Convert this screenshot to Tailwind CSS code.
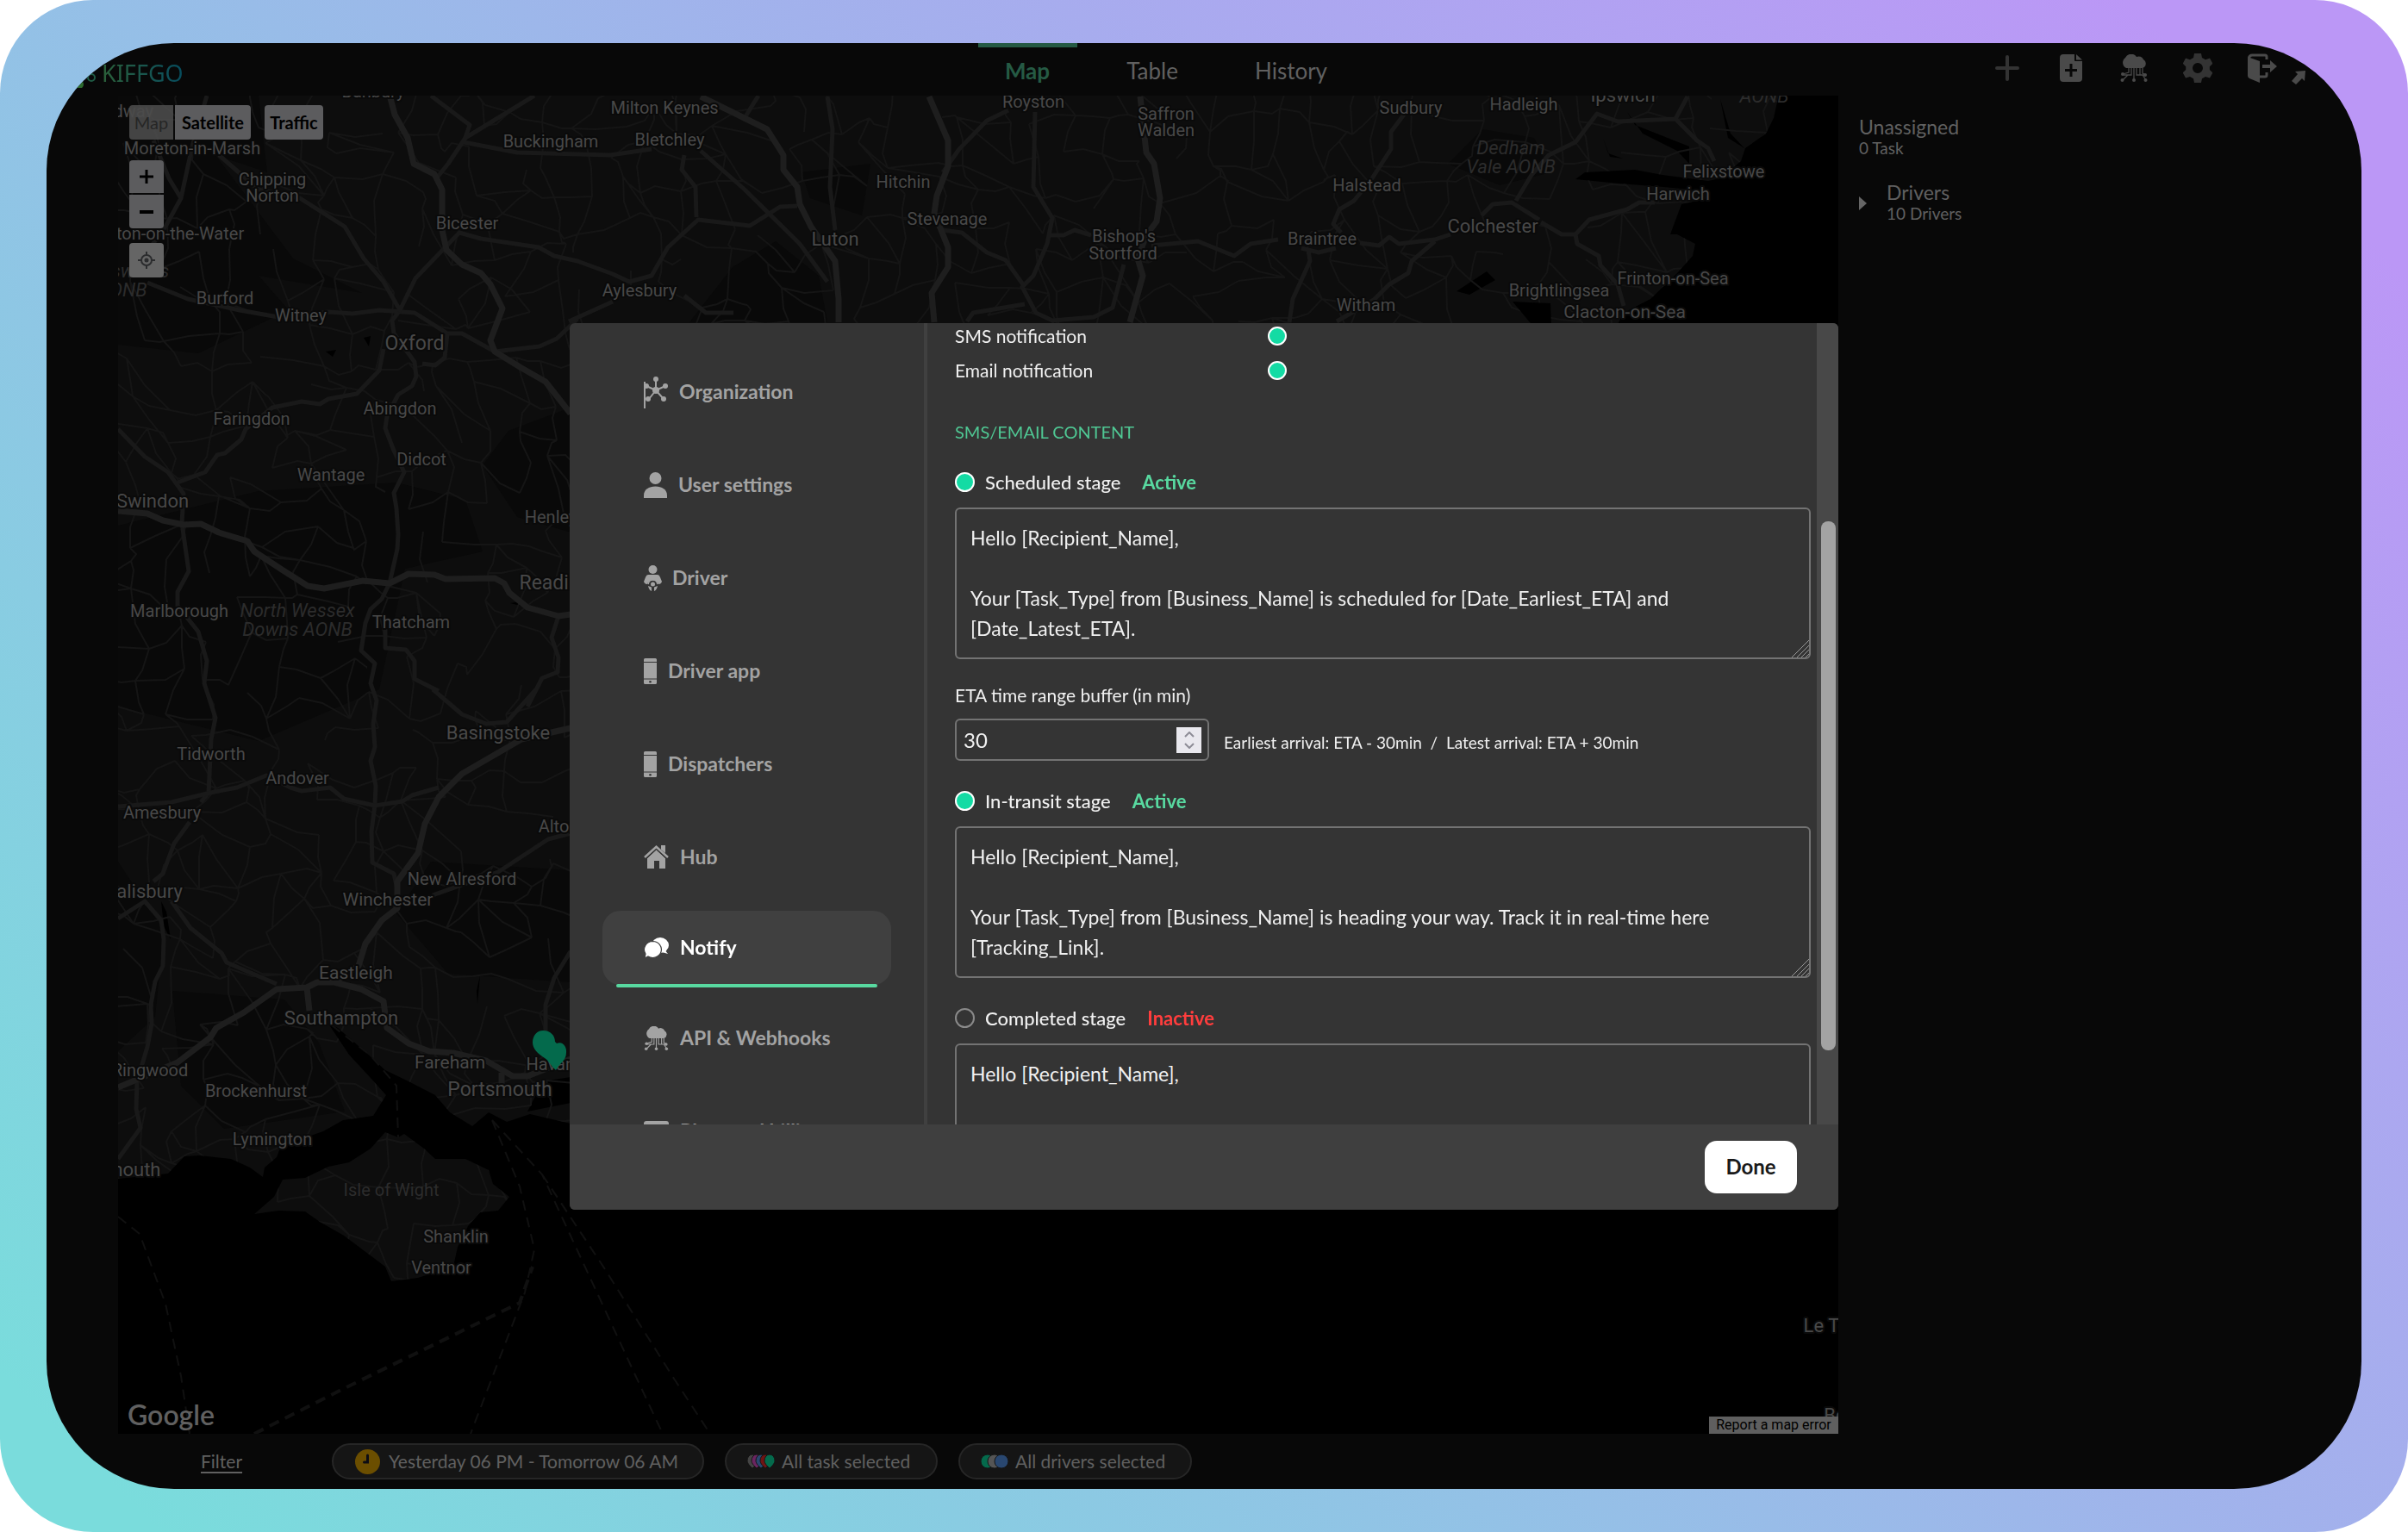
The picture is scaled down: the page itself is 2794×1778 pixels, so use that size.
<!DOCTYPE html>
<html lang="en">
<head>
<meta charset="utf-8">
<title>Kiffgo</title>
<script src="https://cdn.jsdelivr.net/npm/@tailwindcss/browser@4"></script>
</head>
<body class="bg-white font-['Lato',sans-serif]">
<div class="flex h-screen flex-col rounded-[108px] bg-[linear-gradient(45deg,#7adcdc_4%,#bb97f6_93%)] px-[54px] py-[50px]">
<div class="flex min-h-0 flex-1 flex-col overflow-hidden rounded-[148px] bg-[#080808] text-[#606060]">

  <header class="relative flex h-[61px] shrink-0 items-start">
    <a href="#" class="flex h-full w-[340px] items-center pl-[26px] pt-[10px]">
      <svg class="h-8 w-[38px]" viewBox="0 0 38 32" fill="none" stroke="#1f5a44" stroke-width="2"><circle cx="26" cy="20" r="4"/><circle cx="12" cy="28" r="5" fill="#2d6b2f" stroke="none"/><path d="M22 18l-3-8"/></svg>
      <span class="bg-linear-to-r from-[#2b6038] to-[#064c5e] bg-clip-text text-[27px] text-transparent font-['Noto_Sans',sans-serif]">KIFFGO</span>
    </a>
    <nav class="absolute inset-x-0 top-0 flex justify-center pr-[104px] text-[26px] leading-8">
      <a href="#" class="w-[115px] rounded-b-sm border-t-[5px] border-[#255a44] pt-[11px] text-center font-bold text-[#255a44]">Map</a>
      <a href="#" class="ml-[30px] w-[115px] pt-4 text-center">Table</a>
      <a href="#" class="ml-[46px] w-[115px] pt-4 text-center">History</a>
    </nav>
    <div class="relative ml-auto flex h-[58px] items-center gap-[41px] pr-[98px] text-[#4a4a4a]">
      <button aria-label="Add" class="w-7"><svg class="h-8 w-7" viewBox="0 0 28 32" stroke="#333" stroke-width="4" stroke-linecap="round"><path d="M14 3v26M2 16h24"/></svg></button>
      <button aria-label="New file" class="ml-[6px]"><svg class="h-8 w-[26px]" viewBox="0 0 26 32"><path fill="currentColor" fill-rule="evenodd" d="M4 0h13v7q0 1 1 1h8v20q0 4-4 4H4q-4 0-4-4V4q0-4 4-4zM11.500 11v6H6v3h5.500v6h3v-6H20v-3h-5.500v-6z"/><path fill="currentColor" d="M19 0l7 6.500h-7z"/></svg></button>
      <button aria-label="Webhooks" class="ml-[3px]"><svg class="h-8 w-8" viewBox="0 0 32 32"><path fill="currentColor" d="M7 16a7 7 0 0 1-1-12 7.500 7.500 0 0 1 13-1 6 6 0 0 1 8 3 5.500 5.500 0 0 1-1 10z"/><g stroke="currentColor" fill="none" stroke-width="1.300"><path d="M16 16v13M13 16v8H4M19 16v8h10M10 16v5l-7 2M9 24l-6 6M23 16v8M26 16v6l4 2M26 24l4 6"/></g><g fill="currentColor"><circle cx="3" cy="23" r="2"/><circle cx="2.500" cy="30" r="2"/><circle cx="16" cy="30" r="2"/><circle cx="29" cy="24" r="2"/><circle cx="29.500" cy="30" r="2"/></g></svg></button>
      <button aria-label="Settings"><svg class="h-[34px] w-[34px]" viewBox="0 0 34 34"><path fill="#333" fill-rule="evenodd" d="M13 0h8l1 5 4 2.300 5-1.800 3.500 6.300-3.600 3.500v3.600l3.600 3.500-3.500 6.200-5-1.700-4 2.300-1 4.800h-8l-1-4.800-4-2.300-5 1.700L-.3 22.400l3.500-3.500v-3.600L-.3 11.800 3 5.500l5 1.800L12 5zM17 11a6 6 0 1 0 0 12a6 6 0 1 0 0-12z"/></svg></button>
      <button aria-label="Log out"><svg class="h-[34px] w-[34px]" viewBox="0 0 34 34"><path fill="currentColor" d="M0 4l14 5v25L2 29q-2-1-2-3z"/><path fill="none" stroke="currentColor" stroke-width="3" d="M1.500 6q0-4 4-4H20q2 0 2 2v3M14 27h6q2 0 2-2v-3"/><path fill="currentColor" d="M17 13h9V8l8 7-8 7v-5h-9z"/></svg></button>
    </div>
    <svg class="absolute right-[65px] top-8 h-4 w-4" viewBox="0 0 16 16" fill="#4a4a4a"><path d="M4 1l12-1-1 12-3-3-7 7-5-4 7-8z"/></svg>
  </header>

  <div class="flex min-h-0 flex-1">
    <main class="relative ml-[83px] flex-1 overflow-hidden bg-black">
      <svg class="absolute inset-0 h-full w-full font-['Roboto',sans-serif]" viewBox="137 111 1996 1553" preserveAspectRatio="xMinYMin slice">
        <defs><clipPath id="land"><path d="M130 100H2066L2058 137L2049 155L2025 172L2020 187L1996 207L1982 210L1929 203L1897 197L1839 200L1828 208L1879 213L1930 217L1982 222L1982 230L1951 237L1938 272L1946 272L1967 283L1964 297L1946 317L1915 347L1884 363L1875 380H1800L1799 352L1755 350L1780 380L1700 1300L662 1304L615 1293L588 1302L567 1291L548 1307L522 1291L505 1271L474 1255L447 1242L423 1220L392 1193L381 1188L405 1224L430 1251L448 1271L433 1295L398 1300L375 1313L326 1330L321 1343L307 1355L305 1366L290 1355L268 1345L232 1341L214 1342L195 1362L137 1368H130ZM295 1409L318 1389L328 1369L354 1367L381 1354L405 1349L430 1333L447 1314L462 1320L469 1316L492 1333L505 1345L540 1345L567 1358L572 1374L591 1389L578 1405L557 1407L543 1423L531 1447L526 1470L485 1483L454 1487L447 1470L423 1452L399 1434L371 1418L354 1406L323 1405Z"/></clipPath></defs>
        <rect x="130" y="100" width="2010" height="1570" fill="#0d0d0d" clip-path="url(#land)"/>
        <g fill="#090909">
          <path d="M137 111H300L310 200L250 180L340 300L420 340L300 320L335 360L230 410L137 400ZM137 610L300 570L460 560L540 580L560 640L470 660L440 800L300 860L137 820ZM590 500L670 470V620L600 600L560 540ZM500 1000L662 1010V1140L520 1130L460 1060ZM137 1000L190 1080L180 1180L137 1220ZM200 1150L330 1160L370 1210L400 1290L260 1310L210 1260ZM800 374L850 310L900 280L950 320L960 374ZM930 200L1010 190L1000 250L940 230ZM1680 190L1720 150L1780 160L1800 200L1740 215Z"/>
        </g>
        <g fill="#000"><path d="M1888 130L1897 145L1960 170L1960 190L1946 175L1906 155ZM1860 160L1866 178L1883 184L1868 182ZM1690 338L1725 315L1735 325L1705 342ZM378 408L390 406L386 414ZM422 392L430 390L428 402ZM592 700L604 698L608 704ZM187 1046L193 1058L198 1090L190 1075ZM553 1150L557 1132L554 1165ZM630 1255L662 1250V1280L612 1290ZM1996 115L2008 155L2024 172L2005 160Z"/></g>
        <g id="lanes" clip-path="url(#land)" fill="none" stroke="#151515" stroke-width="2"></g>
        <g fill="none" stroke="#191919" stroke-width="5" stroke-linejoin="round">
          <path d="M464 360L455 372L457 387L481 420L483 437L478 448L462 458L449 483L447 497L457 523L469 548L457 572L460 590L462 620L461 637L452 677L443 695L430 707L424 723L419 755L435 770L430 793L437 813L433 840L435 867L430 883L436 912L435 934L431 965L432 1001L457 1014L461 1032"/>
          <path d="M171 328L218 347L278 360L323 368L381 362L409 364L440 360L481 363L519 387L536 387L574 408L626 402L646 393L670 370"/>
          <path d="M254 180L277 200L300 220L348 230L400 263L422 300L445 327L464 360L482 323L533 270L558 277L625 287L643 297L670 303L711 318L730 327L756 320L775 287L810 255L870 262L905 240L925 239"/>
          <path d="M178 163L196 207L210 230L192 263L165 300M223 170L210 230M240 111L223 170M620 111L540 160L520 190L508 205M500 111L545 145L538 165M538 165L600 177L708 180L756 173"/>
          <path d="M445 405L440 430L414 457L381 463L371 469L350 466L316 473L285 498L280 510L261 526L252 528L238 548L206 560"/>
          <path d="M519 387L516 415L505 424L490 422M137 498L168 530L195 548L213 573L211 607L219 663L206 687L206 703L230 733L240 767L237 793L250 833L245 858L242 920L233 931"/>
          <path d="M137 936L199 931L244 920L275 914L309 900L337 914L350 918L383 914L399 927L435 935L467 930L478 923L509 914"/>
          <path d="M199 1046L221 1077L257 1106L263 1117L321 1142M137 1066L168 1046L187 1068L190 1090L189 1121L180 1139L175 1166L176 1188L171 1215L159 1255L158 1287L163 1309L137 1345M220 954L202 979L189 1014L178 1023"/>
          <path d="M502 1039L578 1012L636 974L670 965M662 1104L643 1135L633 1166L633 1197M502 800L536 829L564 840L588 838L622 800M447 730L447 752L471 754L481 767L481 788L509 802M648 715L640 740L648 763L647 780L629 787L612 820"/>
          <path d="M1170 128L1145 140L1113 173L1094 200M1201 130L1199 217L1221 253L1215 283L1199 320L1186 333L1202 363L1221 372L1269 368L1291 357L1304 307M1218 273L1234 273L1247 267L1266 273"/>
          <path d="M1336 285L1390 280L1432 297L1451 283L1483 278M1578 282L1600 285L1612 275L1623 283L1665 278L1683 272M1551 373L1594 348L1612 330L1634 317L1638 303L1665 280M1788 258L1812 272L1828 272L1844 255L1888 243L1902 235L1920 235M1828 272L1830 283L1855 297L1857 308L1877 330L1884 355"/>
          <path d="M1719 250L1732 237L1754 235L1786 255M1759 233L1777 203L1797 180L1828 165L1853 132L1877 141L1944 138L1958 112M1944 138L1969 163L1982 172L1989 187M1629 133L1614 153L1614 173L1592 207L1571 233L1554 243L1547 260L1556 270M1518 290L1520 303L1500 347L1496 374M1510 288L1530 293L1550 288"/>
          <path d="M794 180L791 197L807 217L808 252M813 175L864 220L928 283L960 327M794 343L819 363L851 363M660 373L711 350M1094 267L1116 270L1145 293L1167 302L1189 333M1122 373L1129 363L1189 353M960 112L966 150L963 217L969 267M880 111L862 140"/>
        </g>
        <g fill="none" stroke="#1e1e1e" stroke-width="7" stroke-linejoin="round">
          <path d="M137 593L171 596L189 604L213 609L233 608L254 618L287 628L295 640L330 663L357 680L376 683L421 674L452 677L474 666L504 667L517 672L574 671L585 677L591 688L612 705L648 715L662 713"/>
          <path d="M453 114L458 133L473 160L480 190L504 202L513 220L513 267L518 290L536 307L558 317L569 330L583 358L569 395L574 408L605 427L633 443L662 480"/>
          <path d="M662 845L605 858L536 898L509 925L493 956L485 990L461 1023L461 1054L443 1068L424 1095L416 1121L388 1140L368 1140L356 1146L321 1148L283 1175L251 1193L244 1204L206 1233L137 1262M356 1146L359 1173M388 1140L419 1148L445 1162L449 1193L474 1211L498 1220L526 1222L564 1231L595 1249L612 1249L662 1229M582 1245V1262"/>
          <path d="M813 112L890 150L909 180L909 197L925 217L928 237L941 263L969 303L973 347V374M1078 112L1100 163V193L1087 227L1084 247L1100 287V310L1081 340L1084 374M1323 112L1330 177L1339 190L1346 230L1342 257L1330 273L1320 300L1326 320L1311 374"/>
        </g>
        <g fill="none" stroke="#101010" stroke-width="2" stroke-dasharray="12 8">
          <path d="M137 1412L162 1432L192 1513L210 1597L220 1664M571 1300L603 1377L620 1450L609 1500L546 1664M571 1300L629 1363L739 1600L769 1664M629 1363L700 1470L782 1600L824 1664M385 1190L430 1225L460 1260L462 1320"/>
          <path stroke-width="4" d="M295 1664L402 1610L603 1512L618 1470"/>
        </g>
        <g fill="#484848" stroke="#0a0a0a" stroke-width="4" paint-order="stroke" stroke-linejoin="round" text-anchor="middle" font-size="20">
          <text x="134" y="136">Broadway</text><text x="223" y="179">Moreton-in-Marsh</text><text x="316" y="215">Chipping</text><text x="316" y="234">Norton</text><text x="542" y="266">Bicester</text><text x="639" y="171">Buckingham</text><text x="433" y="113">Banbury</text>
          <text x="188" y="278">Bourton-on-the-Water</text><text x="261" y="353">Burford</text><text x="349" y="373">Witney</text><text x="292" y="493">Faringdon</text><text x="464" y="481">Abingdon</text><text x="489" y="540">Didcot</text><text x="384" y="558">Wantage</text><text x="692" y="607">Henley-on-Thames</text>
          <text x="208" y="716">Marlborough</text><text x="477" y="729">Thatcham</text><text x="245" y="882">Tidworth</text><text x="345" y="910">Andover</text><text x="188" y="950">Amesbury</text><text x="648" y="966">Alton</text><text x="536" y="1027">New Alresford</text><text x="450" y="1051" font-size="21">Winchester</text>
          <text x="413" y="1136" font-size="21">Eastleigh</text><text x="522" y="1240" font-size="21">Fareham</text><text x="642" y="1242">Havant</text><text x="174" y="1249">Ringwood</text><text x="297" y="1273">Brockenhurst</text><text x="316" y="1329">Lymington</text><text x="529" y="1442">Shanklin</text><text x="512" y="1478">Ventnor</text>
          <text x="771" y="132">Milton Keynes</text><text x="777" y="169">Bletchley</text><text x="742" y="344">Aylesbury</text><text x="1048" y="218">Hitchin</text><text x="1099" y="261">Stevenage</text><text x="1199" y="125">Royston</text><text x="1353" y="139">Saffron</text><text x="1353" y="158">Walden</text><text x="1304" y="281">Bishop's</text><text x="1303" y="301">Stortford</text><text x="969" y="285" font-size="22">Luton</text>
          <text x="1637" y="132">Sudbury</text><text x="1768" y="128">Hadleigh</text><text x="1586" y="222">Halstead</text><text x="1534" y="284">Braintree</text><text x="1585" y="361">Witham</text><text x="2000" y="206">Felixstowe</text><text x="1947" y="232">Harwich</text><text x="1941" y="330">Frinton-on-Sea</text><text x="1809" y="344">Brightlingsea</text><text x="1885" y="369" font-size="21">Clacton-on-Sea</text>
          <g font-size="22"><text x="481" y="406" font-size="23">Oxford</text><text x="177" y="589">Swindon</text><text x="644" y="684" font-size="23">Reading</text><text x="578" y="858">Basingstoke</text><text x="167" y="1042">Salisbury</text><text x="396" y="1189">Southampton</text><text x="580" y="1272" font-size="23">Portsmouth</text><text x="120" y="1365">Bournemouth</text><text x="1732" y="270">Colchester</text><text x="1883" y="118">Ipswich</text><text x="2147" y="1546">Le Touquet</text><text x="2144" y="1650">Berck</text></g>
        </g>
        <g fill="#2c2c2c" font-style="italic" font-size="22" text-anchor="middle"><text x="345" y="716">North Wessex</text><text x="345" y="738">Downs AONB</text><text x="1753" y="179">Dedham</text><text x="1753" y="201">Vale AONB</text><text x="2047" y="119">AONB</text><text x="142" y="344">AONB</text><text x="146" y="322">Cotswolds</text><text x="454" y="1388" font-size="20" font-style="normal">Isle of Wight</text></g>
        <path fill="#046a4c" d="M630 1196c9 0 14 6 14 13l2 2c7-3 12 4 11 11 0 9-8 12-12 20-6-5-8-11-13-14-8-5-14-11-14-18 0-8 5-14 12-14z"/>
      </svg>

      <div class="absolute left-[13px] top-[11px] flex flex-col items-start font-bold text-black">
        <div class="flex h-10 text-[20px]">
          <button class="w-[51px] rounded-l bg-[#4b4b4b]/90 text-[20px] font-normal text-[#262626]">Map</button>
          <button class="ml-[2px] w-[88px] rounded-r bg-[#5c5c5e]">Satellite</button>
          <button class="ml-4 w-[68px] rounded bg-[#5c5c5e]">Traffic</button>
        </div>
        <button aria-label="Zoom in" class="mt-6 grid h-[38px] w-10 place-items-center rounded-t bg-[#5c5c5e]"><svg class="size-4" viewBox="0 0 16 16" stroke="#000" stroke-width="3"><path d="M8 0v16M0 8h16"/></svg></button>
        <button aria-label="Zoom out" class="mt-[2px] grid h-[39px] w-10 place-items-center rounded-b bg-[#5c5c5e]"><svg class="size-4" viewBox="0 0 16 16" stroke="#000" stroke-width="4"><path d="M0 8h16"/></svg></button>
        <button aria-label="My location" class="mt-[17px] grid h-10 w-10 place-items-center rounded bg-[#656565]"><svg class="size-5" viewBox="0 0 20 20" fill="none" stroke="#2b2c2e" stroke-width="2"><circle cx="10" cy="10" r="6"/><circle cx="10" cy="10" r="2.500" fill="#2b2c2e" stroke="none"/><path d="M10 0v4M10 16v4M0 10h4M16 10h4"/></svg></button>
      </div>
      <span class="absolute bottom-1 left-[11px] text-[32px] font-semibold leading-9 text-[#606060]">Google</span>
      <a href="#" class="absolute bottom-0 right-0 flex h-5 w-[150px] items-center justify-center whitespace-nowrap bg-[#5f5f5f] font-['Roboto',sans-serif] text-[16px] text-black">Report a map error</a>
    </main>

    <aside class="w-[607px] pl-6 pt-6">
      <div class="text-[23px] leading-6">Unassigned</div>
      <div class="text-[19px] leading-[26px]">0 Task</div>
      <div class="mt-[26px] flex items-center">
        <svg class="h-4 w-[9px]" viewBox="0 0 9 16" fill="#666"><path d="M0 0l9 8-9 8z"/></svg>
        <div class="ml-[23px]"><div class="text-[23px] leading-6">Drivers</div><div class="text-[19px] leading-[26px]">10 Drivers</div></div>
      </div>
    </aside>
  </div>

  <footer class="flex h-16 shrink-0 items-center pl-[179px] text-[21px]">
    <a href="#" class="w-[152px] underline underline-offset-4">Filter</a>
    <button class="flex h-[42px] w-[432px] items-center rounded-full border-2 border-[#262626] bg-[#151515] pl-[25px]">
      <svg class="mr-[10px] size-[29px]" viewBox="0 0 29 29"><circle cx="14.500" cy="14.500" r="14.500" fill="#6b4e00"/><path d="M14.500 7v8h-4" fill="none" stroke="#0c0c14" stroke-width="3" stroke-linecap="round"/></svg>Yesterday 06 PM - Tomorrow 06 AM</button>
    <button class="ml-6 flex h-[42px] w-[247px] items-center rounded-full border-2 border-[#262626] bg-[#151515] pl-6">
      <svg class="mr-2 h-4 w-8" viewBox="0 0 32 16" stroke="#151515"><path fill="#444" d="M6 0a6 7 0 0 1 6 7c0 4-4 7-6 9-2-2-6-5-6-9a6 7 0 0 1 6-7z"/><path fill="#6b2560" d="M11 0a6 7 0 0 1 6 7c0 4-4 7-6 9-2-2-6-5-6-9a6 7 0 0 1 6-7z"/><path fill="#294770" d="M16 0a6 7 0 0 1 6 7c0 4-4 7-6 9-2-2-6-5-6-9a6 7 0 0 1 6-7z"/><path fill="#701414" d="M21 0a6 7 0 0 1 6 7c0 4-4 7-6 9-2-2-6-5-6-9a6 7 0 0 1 6-7z"/><path fill="#046a4c" d="M26 0a6 7 0 0 1 6 7c0 4-4 7-6 9-2-2-6-5-6-9a6 7 0 0 1 6-7z"/></svg>All task selected</button>
    <button class="ml-6 flex h-[42px] w-[271px] items-center rounded-full border-2 border-[#262626] bg-[#151515] pl-6">
      <svg class="mr-2 h-4 w-8" viewBox="0 0 32 16" stroke="#151515"><circle cx="8" cy="8" r="8" fill="#046a4c"/><circle cx="16" cy="8" r="8" fill="#555"/><circle cx="24" cy="8" r="8" fill="#294770"/></svg>All drivers selected</button>
  </footer>
</div>
</div>

<div class="fixed inset-0 grid place-items-center">
<section role="dialog" aria-label="Settings" class="flex h-[1029px] w-[1472px] max-w-full flex-col overflow-hidden rounded-md bg-[#343434] text-[#f0f0f0]">
  <div class="flex min-h-0 flex-1">
    <nav class="w-[411px] shrink-0 overflow-hidden pt-[26px] text-[23px] font-bold text-[#a3a3a3]">
      <a href="#" class="flex h-[108px] items-center gap-[13px] pl-[86px]"><svg class="h-[38px] w-7" viewBox="0 0 28 38" fill="currentColor"><rect x="0" y="7" width="2" height="31"/><path stroke="currentColor" stroke-width="2" d="M14 17V4M14 17L3 12M14 17L25 12M14 17L6 27M14 17L23 27"/><circle cx="14" cy="17" r="4"/><circle cx="14" cy="4" r="3"/><circle cx="3" cy="12" r="3"/><circle cx="25" cy="12" r="3"/><circle cx="5" cy="27" r="3"/><circle cx="23" cy="27" r="3"/></svg>Organization</a>
      <a href="#" class="flex h-[108px] items-center gap-[13px] pl-[86px]"><svg class="h-[30px] w-[27px]" viewBox="0 0 27 30" fill="currentColor"><circle cx="13.500" cy="7" r="7"/><path d="M0 30V27C0 20 6 16.500 13.500 16.500S27 20 27 27v3z"/></svg>User settings</a>
      <a href="#" class="flex h-[108px] items-center gap-3 pl-[86px]"><svg class="h-[30px] w-[21px]" viewBox="0 0 21 30" fill="currentColor"><circle cx="10.500" cy="5" r="5"/><path d="M5 11h11q2 0 3 3l2 5q-1 3-4 3a7 7 0 0 0-13 0q-3 0-4-3l2-5q1-3 3-3z"/><path fill="none" stroke="currentColor" stroke-width="1.500" d="M5 22q1-5 5.500-5t5.500 5"/><circle cx="10.500" cy="22" r="2.500"/><path d="M5 24l4 1.500V30q-3-1-4-6zM16 24l-4 1.500V30q3-1 4-6z"/></svg>Driver</a>
      <a href="#" class="flex h-[108px] items-center gap-[13px] pl-[86px]"><svg class="h-[30px] w-[15px]" viewBox="0 0 15 30" fill="currentColor"><path d="M1.500 0h12q1.500 0 1.500 1.500V4H0V1.500Q0 0 1.500 0zM0 5h15v18.500H0zM0 24.500h15v4Q15 30 13.500 30h-12Q0 30 0 28.500z"/><circle cx="7.500" cy="27.300" r="1.300" fill="#343434"/></svg>Driver app</a>
      <a href="#" class="flex h-[108px] items-center gap-[13px] pl-[86px]"><svg class="h-[30px] w-[15px]" viewBox="0 0 15 30" fill="currentColor"><path d="M1.500 0h12q1.500 0 1.500 1.500V4H0V1.500Q0 0 1.500 0zM0 5h15v18.500H0zM0 24.500h15v4Q15 30 13.500 30h-12Q0 30 0 28.500z"/><circle cx="7.500" cy="27.300" r="1.300" fill="#343434"/></svg>Dispatchers</a>
      <a href="#" class="flex h-[108px] items-center gap-[13px] pl-[86px]"><svg class="h-[27px] w-[29px]" viewBox="0 0 29 27" fill="currentColor"><path d="M14.500 5L25 15v12h-7v-9h-6v9H4V15z"/><path fill="none" stroke="#343434" stroke-width="1" d="M2.500 16L14.500 5 26.500 16"/><path fill="none" stroke="currentColor" stroke-width="2.500" d="M1 14L14.500 1.800 28 14"/><path d="M20 0h5v9l-5-4z"/></svg>Hub</a>
      <a href="#" aria-current="page" class="relative mx-[38px] my-2 flex h-[86px] items-center gap-[13px] rounded-[21px] bg-[#404040] pl-12 text-white after:absolute after:inset-x-4 after:-bottom-[3px] after:h-1 after:rounded-sm after:bg-[#58d9a0]"><svg class="h-6 w-[29px]" viewBox="0 0 29 24" fill="#fff"><ellipse cx="19" cy="9" rx="10" ry="9"/><path d="M24 14l4 5-7-2z"/><path stroke="#404040" stroke-width="1.200" d="M10.500 4.500a10 9.500 0 1 1-5.500 17.500L1 24l1-5A10 9.500 0 0 1 10.500 4.500z"/></svg>Notify</a>
      <a href="#" class="flex h-[108px] items-center gap-[13px] pl-[86px]"><svg class="h-7 w-[29px]" viewBox="0 0 32 32" fill="currentColor"><path d="M7 16a7 7 0 0 1-1-12 7.500 7.500 0 0 1 13-1 6 6 0 0 1 8 3 5.500 5.500 0 0 1-1 10z"/><g stroke="currentColor" fill="none" stroke-width="1.300"><path d="M16 16v13M13 16v8H4M19 16v8h10M10 16v5l-7 2M9 24l-6 6M23 16v8M26 16v6l4 2M26 24l4 6"/></g><circle cx="3" cy="23" r="2"/><circle cx="2.500" cy="30" r="2"/><circle cx="16" cy="30" r="2"/><circle cx="29" cy="24" r="2"/><circle cx="29.500" cy="30" r="2"/></svg>API &amp; Webhooks</a>
      <a href="#" class="flex h-[108px] items-center gap-[13px] pl-[86px]"><svg class="h-6 w-[29px]" viewBox="0 0 29 24" fill="currentColor"><path d="M3 0h23q3 0 3 3v2H0V3q0-3 3-3zM0 9h29v12q0 3-3 3H3q-3 0-3-3z"/></svg>Plans and billing</a>
    </nav>
    <div class="min-w-0 flex-1 overflow-hidden border-l-4 border-[#404040] pl-8 pr-[7px]">
      <div class="flex h-[31px] items-center text-[21px]"><label for="sms" class="w-[363px]">SMS notification</label><input id="sms" type="checkbox" checked class="size-[22px] appearance-none rounded-full border-2 border-white bg-[#14dba4]"></div>
      <div class="flex h-12 items-center text-[21px]"><label for="email" class="w-[363px]">Email notification</label><input id="email" type="checkbox" checked class="size-[22px] appearance-none rounded-full border-2 border-white bg-[#14dba4]"></div>
      <h2 class="h-[76px] pt-[35px] text-[20px] leading-6 text-[#4fc793]">SMS/EMAIL CONTENT</h2>
      <div class="flex h-[59px] items-center text-[22px]"><input id="st1" type="checkbox" checked class="mr-3 size-[23px] appearance-none rounded-full border-2 border-white bg-[#14dba4]"><label for="st1" class="font-medium">Scheduled stage</label><span class="ml-[25px] font-bold text-[#58d9a0]">Active</span></div>
      <div class="relative"><textarea aria-label="Scheduled message" class="block h-[176px] w-full resize-none overflow-hidden rounded-md border-2 border-[#737373] bg-transparent px-4 pt-4 text-[23px] leading-[35px]">Hello [Recipient_Name],

Your [Task_Type] from [Business_Name] is scheduled for [Date_Earliest_ETA] and [Date_Latest_ETA].</textarea><svg class="absolute bottom-[2px] right-[2px] size-5" viewBox="0 0 20 20" stroke="#999"><path d="M0 20L20 0M6 20L20 6M11 20l9-9M16 20l4-4"/></svg></div>
      <label for="eta" class="mt-[18px] block h-[51px] text-[21px] leading-[48px]">ETA time range buffer (in min)</label>
      <div class="flex items-center">
        <div class="relative w-[295px]"><input id="eta" type="number" value="30" class="h-[49px] w-full rounded-md border-2 border-[#737373] bg-transparent px-2 text-[24px] [appearance:textfield]"><span class="absolute right-[9px] top-[10px] grid h-[30px] w-[29px] place-items-center bg-[#e9e8ee]"><svg class="h-5 w-3" viewBox="0 0 12 20" fill="none" stroke="#8d8c96" stroke-width="2"><path d="M1 6l5-5 5 5M1 14l5 5 5-5"/></svg></span></div>
        <span class="ml-[17px] pt-2 text-[19px]">Earliest arrival: ETA - 30min&nbsp; /&nbsp; Latest arrival: ETA + 30min</span>
      </div>
      <div class="mt-[17px] flex h-[59px] items-center text-[22px]"><input id="st2" type="checkbox" checked class="mr-3 size-[23px] appearance-none rounded-full border-2 border-white bg-[#14dba4]"><label for="st2" class="font-medium">In-transit stage</label><span class="ml-[25px] font-bold text-[#58d9a0]">Active</span></div>
      <div class="relative"><textarea aria-label="In-transit message" class="block h-[176px] w-full resize-none overflow-hidden rounded-md border-2 border-[#737373] bg-transparent px-4 pt-4 text-[23px] leading-[35px]">Hello [Recipient_Name],

Your [Task_Type] from [Business_Name] is heading your way. Track it in real-time here [Tracking_Link].</textarea><svg class="absolute bottom-[2px] right-[2px] size-5" viewBox="0 0 20 20" stroke="#999"><path d="M0 20L20 0M6 20L20 6M11 20l9-9M16 20l4-4"/></svg></div>
      <div class="mt-[17px] flex h-[59px] items-center text-[22px]"><input id="st3" type="checkbox" class="mr-3 size-[23px] appearance-none rounded-full border-2 border-[#8a8a8a]"><label for="st3" class="font-medium">Completed stage</label><span class="ml-[25px] font-bold text-[#ff3d3d]">Inactive</span></div>
      <textarea aria-label="Completed message" class="block h-[176px] w-full resize-none overflow-hidden rounded-md border-2 border-[#737373] bg-transparent px-4 pt-4 text-[23px] leading-[35px]">Hello [Recipient_Name],</textarea>
    </div>
    <div class="w-[25px] shrink-0 bg-[#484848] pl-[5px] pr-[3px] pt-[230px]"><div class="h-[614px] rounded-lg bg-[#a3a3a3]"></div></div>
  </div>
  <div class="flex h-[99px] shrink-0 items-center justify-end bg-[#3f3f3f] pr-12"><button class="h-[61px] w-[107px] rounded-[14px] bg-white text-[24px] font-bold text-[#1a1a1a]">Done</button></div>
</section>
</div>

<script>
// Country lanes: a jittered mesh of short segments, the same on every load.
(() => {
  let seed = 7;
  const rnd = () => (seed = (seed * 16807) % 2147483647) / 2147483647;
  const step = 40, cols = 52, rows = 37, pts = [];
  for (let r = 0; r < rows; r++) for (let c = 0; c < cols; c++)
    pts.push([120 + c * step + (rnd() - .5) * 36, 100 + r * step + (rnd() - .5) * 36]);
  const seg = (a, b) => {
    const mx = (a[0] + b[0]) / 2 + (rnd() - .5) * 14, my = (a[1] + b[1]) / 2 + (rnd() - .5) * 14;
    return `M${a[0] | 0} ${a[1] | 0}L${mx | 0} ${my | 0}L${b[0] | 0} ${b[1] | 0}`;
  };
  let d = '';
  for (let r = 0; r < rows - 1; r++) for (let c = 0; c < cols - 1; c++) {
    const i = r * cols + c;
    if (rnd() < .62) d += seg(pts[i], pts[i + 1]);
    if (rnd() < .62) d += seg(pts[i], pts[i + cols]);
    if (rnd() < .22) d += seg(pts[i], pts[i + cols + 1]);
  }
  const p = document.createElementNS('http://www.w3.org/2000/svg', 'path');
  p.setAttribute('d', d);
  document.getElementById('lanes').appendChild(p);
})();
</script>
</body>
</html>
